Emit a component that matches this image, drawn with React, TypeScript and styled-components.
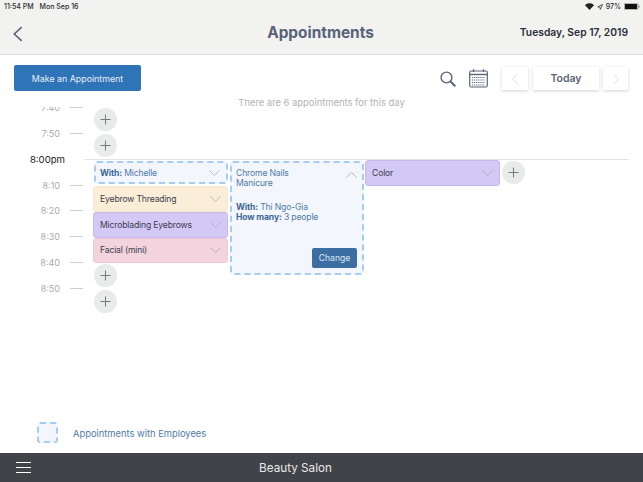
import React from "react";
import styled, { createGlobalStyle } from "styled-components";

const Global = createGlobalStyle`
  html, body { margin: 0; padding: 0; background: #fff; }
  body { font-family: Inter, "Noto Sans", "Liberation Sans", sans-serif; }
  * { box-sizing: border-box; }
`;

const Page = styled.div`
  width: 643px; height: 482px; display: flex; flex-direction: column; overflow: hidden; background: #fff;
`;
const Header = styled.header`
  height: 55px; flex: none; background: #f2f2f1; border-bottom: 1px solid #dcdcdc; display: flex; flex-direction: column;
`;
const StatusBar = styled.div`
  height: 12px; flex: none; display: flex; justify-content: space-between; align-items: center;
  padding: 1px 3px 0 4px; font-size: 7px; font-weight: 500; color: #2a2a2c;
`;
const StatusGroup = styled.div`
  display: flex; align-items: center; gap: 6px;
`;
const StatusIcons = styled(StatusGroup)`
  gap: 3px;
`;
const NavBar = styled.div`
  flex: 1; display: grid; grid-template-columns: 1fr auto 1fr; align-items: center; padding: 0 15px 0 13px;
`;
const BackButton = styled.div`
  display: flex; align-items: center; color: #5a6378; margin-top: 1px;
`;
const Title = styled.h1`
  margin: 0 0 2px; font-size: 15.4px; font-weight: 700; color: #5a6378;
`;
const DateText = styled.div`
  text-align: right; font-size: 10.3px; font-weight: 600; color: #2b2f38; margin-bottom: 2px;
`;
const Toolbar = styled.div`
  height: 36px; flex: none; display: flex; justify-content: space-between; align-items: flex-end; padding: 0 14px;
`;
const PrimaryButton = styled.div`
  width: 127px; height: 26px; background: #3074b8; border-radius: 2px; color: #e6eef8; font-size: 8.85px;
  display: flex; align-items: center; justify-content: center;
`;
const Tools = styled.div`
  display: flex; align-items: center; margin: 0 1px 1px 0; color: #5a6378;
`;
const IconSlot = styled.div`
  display: flex; margin-right: 13px;
`;
const CalendarSlot = styled(IconSlot)`
  margin-right: 14px;
`;
const PagerButton = styled.div<{ $wide?: boolean; $gap?: number }>`
  width: ${(p) => (p.$wide ? "66px" : "26px")}; height: 23px; margin-right: ${(p) => p.$gap ?? 4}px;
  background: #fff; box-shadow: 0 1px 3px rgba(0,0,0,.18); display: flex; align-items: center; justify-content: center;
  font-size: 10.5px; font-weight: 600; color: #5a6378;
  &:last-child { margin-right: 0; width: 25px; }
`;
const Message = styled.div`
  height: 11px; flex: none; text-align: center; font-size: 9.4px; color: #b2b2b2; line-height: 14px; margin-top: 5px;
`;
const Timeline = styled.div`
  position: relative; height: 293px; flex: none; display: flex; overflow: hidden;
`;
const NowLine = styled.div`
  position: absolute; left: 84px; width: 545px; top: 52px; height: 1px; background: #e4e4e4;
`;
const TimeColumn = styled.div`
  width: 93px; flex: none; margin-top: -12px; display: flex; flex-direction: column;
`;
const TimeRow = styled.div`
  height: 25.75px; flex: none; display: flex; align-items: center; font-size: 9px; color: #acacac;
`;
const TimeLabel = styled.div<{ $now?: boolean }>`
  width: 60px; text-align: right; white-space: nowrap;
  ${(p) => p.$now && "width: 65px; color: #1a1a1a; font-size: 9.6px;"}
`;
const Tick = styled.div`
  width: 13px; height: 1px; margin-left: 10px; background: #cfcfcf;
`;
const SlotColumn = styled.div<{ $pad?: number; $left?: number; $right?: number }>`
  width: 135px; flex: none; display: flex; flex-direction: column; padding-top: ${(p) => p.$pad ?? 0}px;
  margin: 0 ${(p) => p.$right ?? 1}px 0 ${(p) => p.$left ?? 0}px;
`;
const Row = styled.div`
  display: flex; align-items: center; gap: 1px;
`;
const AddCircle = styled.div<{ $after?: number }>`
  width: 23px; height: 23px; margin: 1px 0 ${(p) => p.$after ?? 2}px 1px; border-radius: 50%; background: #e9ebeb; color: #77797b;
  display: flex; align-items: center; justify-content: center; flex: none;
`;
const Card = styled.div<{ $bg: string; $border: string }>`
  height: 25.75px; width: 135px; flex: none; padding: 0 6px; border-radius: 3px; display: flex; align-items: center; justify-content: space-between;
  background: ${(p) => p.$bg}; border: 1px solid ${(p) => p.$border}; font-size: 8.6px; letter-spacing: -0.15px; color: #3a3d4a;
`;
const DashedCard = styled.div`
  height: 23px; width: 134px; margin: 0 0 2px 1px; flex: none; padding: 0 6px 0 4px; border-radius: 3px; display: flex; align-items: center; justify-content: space-between;
  background: #f3f7fd; border: 2px dashed #a5cdf2; font-size: 8.6px; letter-spacing: -0.15px; color: #4f79a8;
`;
const Strong = styled.b`
  font-weight: 700; color: #3d6799;
`;
const OpenCard = styled.div`
  width: 134px; height: 114px; background: #f3f7fd; border: 2px dashed #a5cdf2; border-radius: 3px;
  display: flex; flex-direction: column; padding: 5px 5px 5px 4px; font-size: 8.6px; letter-spacing: -0.15px; color: #4f79a8; line-height: 10px;
`;
const OpenHead = styled.div`
  display: flex; justify-content: space-between; align-items: flex-start; padding-bottom: 5px; border-bottom: 1px solid #f9fbff; margin-bottom: 8px;
`;
const ChevronUpSlot = styled.div`
  padding-top: 2px;
`;
const ChangeRow = styled.div`
  margin-top: auto; display: flex; justify-content: flex-end;
`;
const ChangeButton = styled.div`
  width: 45px; height: 20px; background: #3c6ea4; border-radius: 2px; color: #dde8f4; font-size: 8.6px; letter-spacing: 0;
  display: flex; align-items: center; justify-content: center;
`;
const Legend = styled.div`
  height: 53px; flex: none; display: flex; align-items: flex-start; padding: 27px 0 0 37px; gap: 15px; font-size: 9.35px; color: #4f79a8;
`;
const LegendSwatch = styled.div`
  width: 21px; height: 21px; margin-top: -5px; background: #f3f7fd; border: 2px dashed #a5cdf2; border-radius: 3px; flex: none;
`;
const LegendText = styled.div`
  margin-top: 1px;
`;
const Footer = styled.footer`
  flex: 1; background: #404347; display: flex; align-items: center; padding-left: 16px; color: #e8e8e8;
`;
const FooterTitle = styled.div`
  width: 543px; text-align: center; font-size: 11.7px; margin-left: -7px;
`;
const Menu = styled.div`
  width: 15px; height: 11px; flex: none; border-top: 1.5px solid #fff; border-bottom: 1.5px solid #fff; display: flex; align-items: center;
  &::before { content: ""; display: block; width: 100%; height: 1.5px; background: #fff; }
`;

const Chevron = ({ up, color = "#a9abad", w = 11, h = 6 }: { up?: boolean; color?: string; w?: number; h?: number }) => (
  <svg width={w} height={h} viewBox="0 0 11 6" fill="none" stroke={color} strokeWidth="0.8">
    <path d={up ? "M0.5 5.5 L5.5 0.5 L10.5 5.5" : "M0.5 0.5 L5.5 5.5 L10.5 0.5"} />
  </svg>
);
const Side = ({ right, color, w = 9, h = 15, sw = 1 }: { right?: boolean; color: string; w?: number; h?: number; sw?: number }) => (
  <svg width={w} height={h} viewBox="0 0 9 15" fill="none" stroke={color} strokeWidth={sw}>
    <path d={right ? "M1 1 L8 7.5 L1 14" : "M8 1 L1 7.5 L8 14"} />
  </svg>
);
const Plus = () => (
  <svg width="11" height="11" viewBox="0 0 11 11" stroke="currentColor" strokeWidth="1" fill="none">
    <path d="M5.5 0.5V10.5M0.5 5.5H10.5" />
  </svg>
);
const Wifi = () => (
  <svg width="9" height="7" viewBox="0 0 9 7" fill="#222">
    <path d="M4.5 7 L0 2.2 C2.6 -0.4 6.4 -0.4 9 2.2 Z" />
  </svg>
);
const Arrow = () => (
  <svg width="6" height="6" viewBox="0 0 6 6" fill="none" stroke="#333" strokeWidth="0.8">
    <path d="M5.5 0.5 L0.8 2.8 L3 3.2 L3.3 5.4 Z" />
  </svg>
);
const Battery = () => (
  <svg width="16" height="7" viewBox="0 0 16 7">
    <rect x="0.3" y="0.3" width="13.6" height="6.4" rx="1.2" fill="none" stroke="#555" strokeWidth="0.5" />
    <rect x="1" y="1" width="12" height="5" fill="#111" />
    <rect x="14.4" y="2.3" width="1" height="2.4" fill="#777" />
  </svg>
);
const Search = () => (
  <svg width="16" height="16" viewBox="0 0 16 16" fill="none" stroke="#5a6378">
    <circle cx="6.5" cy="6.5" r="5.4" strokeWidth="1.4" />
    <path d="M10.5 10.5 L15.3 15.3" strokeWidth="2" />
  </svg>
);
const Calendar = () => (
  <svg width="19" height="19" viewBox="0 0 19 19" fill="none" stroke="#5a6378">
    <rect x="0.7" y="2" width="17.6" height="16" rx="1.5" strokeWidth="1.2" />
    <path d="M0.7 5.5H18.3" strokeWidth="1.4" />
    <path d="M4.5 0.3V3M14.5 0.3V3" strokeWidth="1.3" />
    <path d="M3 8.5H16M3 11H16M3 13.5H16M3 16H16" strokeWidth="1.1" strokeDasharray="1.2 0.9" />
  </svg>
);

const hours = [
  { label: "7:40" }, { label: "7:50" }, { label: "8:00pm", now: true }, { label: "8:10" },
  { label: "8:20" }, { label: "8:30" }, { label: "8:40" }, { label: "8:50" },
];
const cards = [
  { name: "Eyebrow Threading", bg: "#fbeed9", border: "#f6e6cc" },
  { name: "Microblading Eyebrows", bg: "#d4c8f6", border: "#c6b7ec" },
  { name: "Facial (mini)", bg: "#f3d3de", border: "#f0cad7" },
];

export default function App() {
  return (
    <Page>
      <Global />
      <Header>
        <StatusBar>
          <StatusGroup><span>11:54 PM</span><span>Mon Sep 16</span></StatusGroup>
          <StatusIcons><Wifi /><Arrow /><span>97%</span><Battery /></StatusIcons>
        </StatusBar>
        <NavBar>
          <BackButton><Side color="#5a6378" w={10} h={16} sw={1.5} /></BackButton>
          <Title>Appointments</Title>
          <DateText>Tuesday, Sep 17, 2019</DateText>
        </NavBar>
      </Header>
      <Toolbar>
        <PrimaryButton>Make an Appointment</PrimaryButton>
        <Tools>
          <IconSlot><Search /></IconSlot>
          <CalendarSlot><Calendar /></CalendarSlot>
          <PagerButton $gap={5}><Side color="#d8dadc" w={8} h={12} /></PagerButton>
          <PagerButton $wide>Today</PagerButton>
          <PagerButton><Side right color="#d8dadc" w={8} h={12} /></PagerButton>
        </Tools>
      </Toolbar>
      <Message>There are 6 appointments for this day</Message>
      <Timeline>
        <TimeColumn>
          {hours.map((h) => (
            <TimeRow key={h.label}>
              <TimeLabel $now={h.now}>{h.label}</TimeLabel>
              {!h.now && <Tick />}
            </TimeRow>
          ))}
        </TimeColumn>
        <SlotColumn>
          <AddCircle><Plus /></AddCircle>
          <AddCircle $after={4}><Plus /></AddCircle>
          <DashedCard><span><Strong>With:</Strong> Michelle</span><Chevron /></DashedCard>
          {cards.map((c) => (
            <Card key={c.name} $bg={c.bg} $border={c.border}>{c.name}<Chevron /></Card>
          ))}
          <AddCircle><Plus /></AddCircle>
          <AddCircle><Plus /></AddCircle>
        </SlotColumn>
        <SlotColumn $pad={54} $left={1} $right={0}>
          <OpenCard>
            <OpenHead>
              <span>Chrome Nails<br />Manicure</span>
              <ChevronUpSlot><Chevron up /></ChevronUpSlot>
            </OpenHead>
            <div><Strong>With:</Strong> Thi Ngo-Gia</div>
            <div><Strong>How many:</Strong> 3 people</div>
            <ChangeRow><ChangeButton>Change</ChangeButton></ChangeRow>
          </OpenCard>
        </SlotColumn>
        <SlotColumn $pad={53}>
          <Row>
            <Card $bg="#d4c8f6" $border="#c6b7ec">Color<Chevron /></Card>
            <AddCircle><Plus /></AddCircle>
          </Row>
        </SlotColumn>
        <NowLine />
      </Timeline>
      <Legend>
        <LegendSwatch />
        <LegendText>Appointments with Employees</LegendText>
      </Legend>
      <Footer>
        <Menu />
        <FooterTitle>Beauty Salon</FooterTitle>
      </Footer>
    </Page>
  );
}
